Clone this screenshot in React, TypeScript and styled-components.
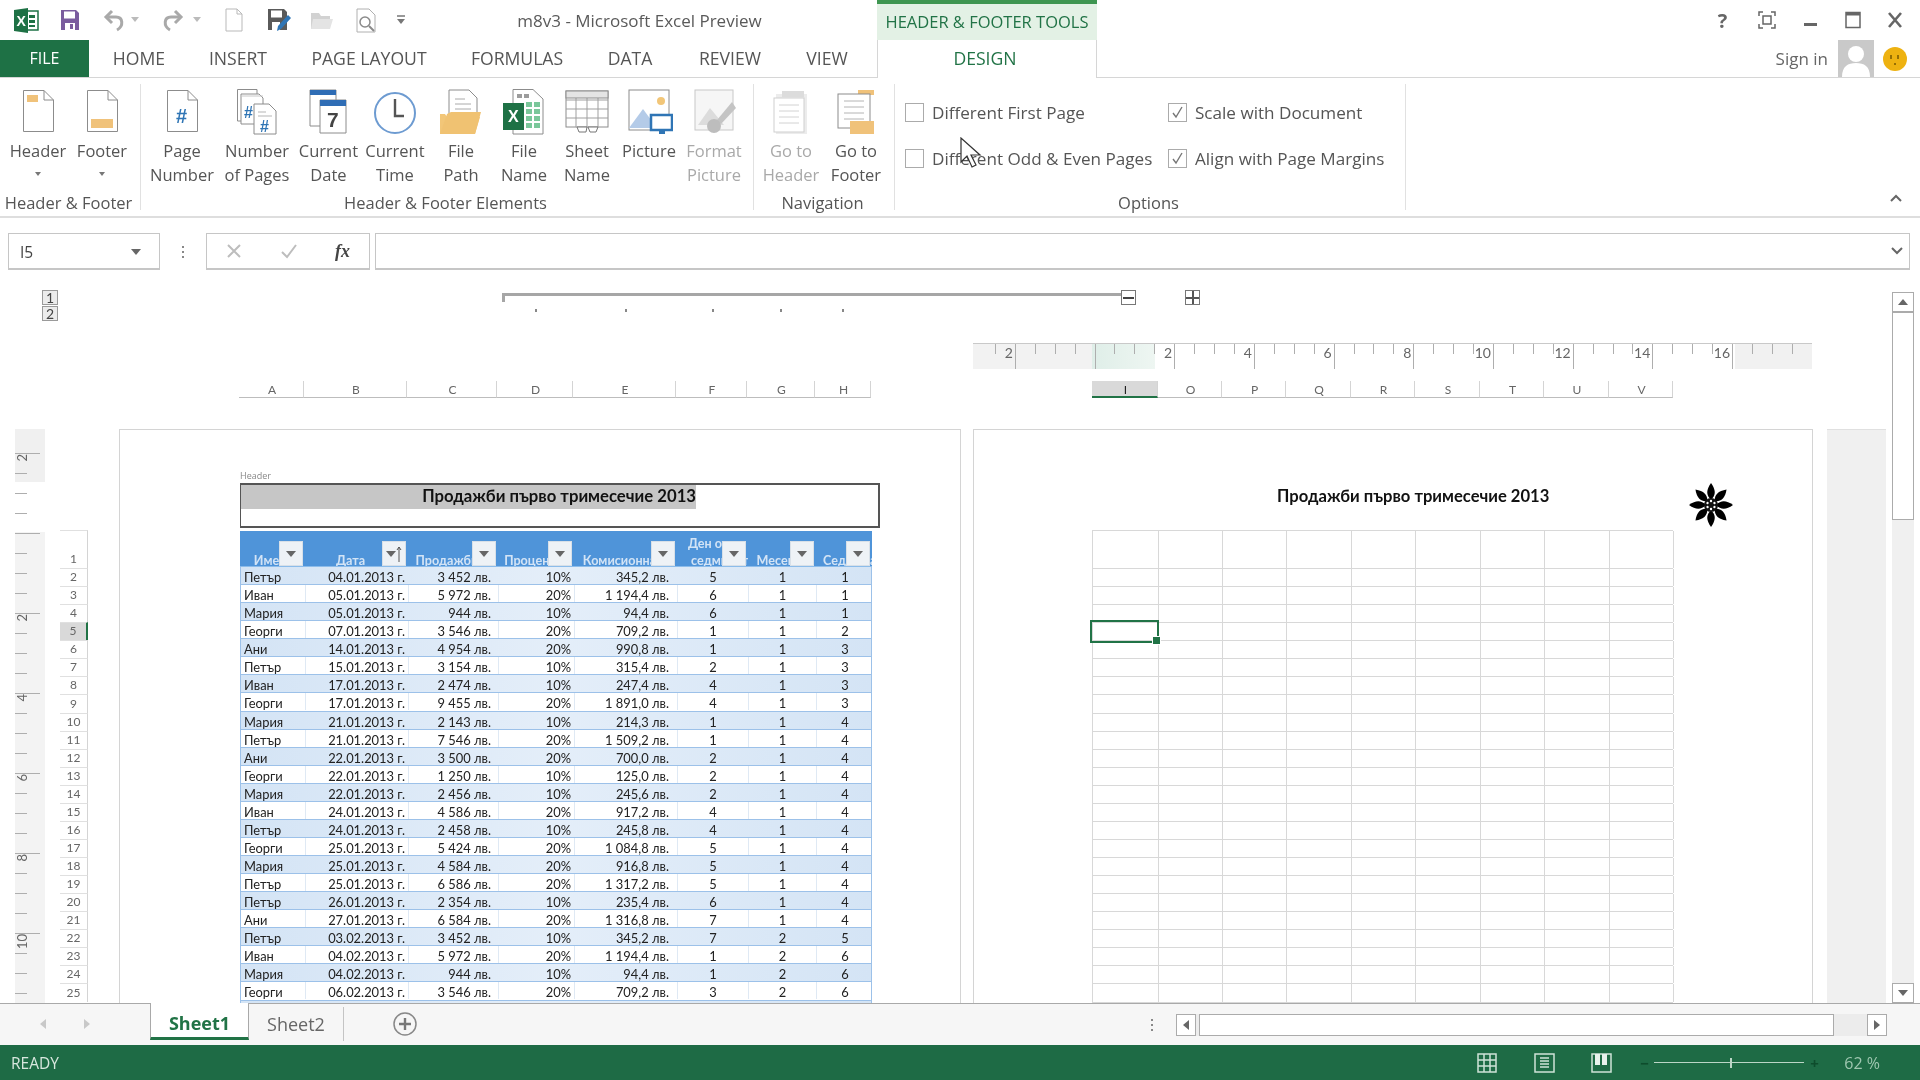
import React from 'react';
import styled, { createGlobalStyle } from 'styled-components';

const UI = '"Open Sans", "Noto Sans", sans-serif';
const SHEET = 'Lato, "Noto Sans", sans-serif';

const GlobalStyle = createGlobalStyle`
    html, body { margin: 0; padding: 0; background: #fff; }
    * { box-sizing: border-box; }
`;

const Window = styled.div`
    position: relative;
    width: 1920px;
    height: 1080px;
    overflow: hidden;
    display: flex;
    flex-direction: column;
    background: #fff;
    font-family: ${UI};
    color: #444;
    filter: blur(0.4px);
`;

/* title bar */
const TitleBar = styled.div`
    height: 40px;
    display: flex;
    align-items: stretch;
`;
const Qat = styled.div`
    width: 410px;
    display: flex;
    align-items: center;
    padding-left: 14px;
`;
const QatIcon = styled.svg<{ $gap: number }>`
    display: block;
    margin-right: ${({ $gap }) => $gap}px;
    flex: none;
`;
const TitleText = styled.div`
    width: 467px;
    text-align: center;
    font-size: 17px;
    line-height: 42px;
    color: #5a5a5a;
    padding-right: 8px;
    white-space: nowrap;
`;
const ToolTab = styled.div`
    width: 220px;
    background: #e3f1e5;
    border-top: 4px solid #3e9651;
    color: #217346;
    font-size: 16.5px;
    line-height: 35px;
    text-align: center;
    white-space: nowrap;
`;
const WindowControls = styled.div`
    margin-left: auto;
    display: flex;
    align-items: center;
    height: 40px;
    padding-right: 18px;
    gap: 27px;
`;
const HelpMark = styled.span`
    font-size: 20px;
    font-weight: 700;
    color: #666;
    width: 17px;
    text-align: center;
`;

/* tabs */
const TabRow = styled.div`
    height: 38px;
    display: flex;
    align-items: stretch;
    border-bottom: 1px solid #d6d6d6;
`;
const FileTab = styled.div`
    width: 89px;
    background: #1e7145;
    color: #fff;
    font-size: 16px;
    text-align: center;
    line-height: 37px;
`;
const Tab = styled.div<{ $w: number }>`
    width: ${({ $w }) => $w}px;
    text-align: center;
    font-size: 17.6px;
    line-height: 37px;
    color: #555;
    white-space: nowrap;
`;
const DesignTab = styled.div`
    width: 220px;
    margin-left: 6px;
    margin-bottom: -1px;
    background: #fff;
    border-right: 1px solid #d6d6d6;
    border-left: 1px solid #d6d6d6;
    color: #217346;
    font-size: 17.6px;
    font-weight: 500;
    line-height: 37px;
    text-align: center;
    padding-right: 4px;
`;
const Account = styled.div`
    margin-left: auto;
    display: flex;
    align-items: center;
    padding-right: 12px;
`;
const SignIn = styled.span`
    font-size: 17px;
    color: #666;
    margin-right: 10px;
`;

/* ribbon */
const Ribbon = styled.div`
    position: relative;
    height: 140px;
    padding-top: 6px;
    display: flex;
    align-items: flex-start;
    border-bottom: 2px solid #dedede;
`;
const Group = styled.div<{ $w: number }>`
    position: relative;
    width: ${({ $w }) => $w}px;
    height: 126px;
    border-right: 1px solid #e1e1e1;
    display: flex;
    flex-direction: column;
    flex: none;
`;
const GroupBody = styled.div<{ $pad: number }>`
    height: 110px;
    padding-left: ${({ $pad }) => $pad}px;
    display: flex;
    flex: none;
`;
const GroupLabel = styled.div`
    padding-right: 3px;
    font-size: 16.5px;
    line-height: 18px;
    text-align: center;
    color: #555;
    white-space: nowrap;
    flex: none;
`;
const RibbonButton = styled.div<{ $w: number; $off?: boolean }>`
    width: ${({ $w }) => $w}px;
    display: flex;
    flex-direction: column;
    align-items: center;
    flex: none;
    color: ${({ $off }) => ($off ? '#a9a9a9' : '#555')};
    font-size: 16.5px;
    line-height: 24px;
    white-space: nowrap;
    text-align: center;
`;
const ButtonIcon = styled.svg`
    display: block;
    margin-top: 4px;
    margin-bottom: 3px;
    flex: none;
`;
const Caret = styled.div`
    margin-top: 9px;
    width: 0;
    height: 0;
    border-left: 3.5px solid transparent;
    border-right: 3.5px solid transparent;
    border-top: 4px solid #777;
`;
const Options = styled.div`
    display: grid;
    grid-template-columns: 263px 1fr;
    grid-auto-rows: 46px;
    padding-top: 5px;
    padding-left: 10px;
    height: 110px;
    flex: none;
`;
const OptionRow = styled.div`
    display: flex;
    align-items: center;
    gap: 8px;
    font-size: 17.1px;
    color: #555;
    white-space: nowrap;
`;
const Check = styled.div`
    width: 19px;
    height: 19px;
    border: 1px solid #ababab;
    background: #fff;
    display: flex;
    align-items: center;
    justify-content: center;
    flex: none;
`;
const CollapseMark = styled.svg`
    position: absolute;
    right: 18px;
    top: 116px;
`;
const Pointer = styled.svg`
    position: absolute;
    left: 65px;
    top: 53px;
`;

/* formula bar */
const FormulaBar = styled.div`
    height: 60px;
    padding: 15px 10px 8px 8px;
    display: flex;
    align-items: stretch;
`;
const NameBox = styled.div`
    width: 152px;
    border: 1px solid #c6c6c6;
    border-bottom-width: 2px;
    display: flex;
    align-items: center;
    justify-content: space-between;
    padding: 2px 18px 0 11px;
    font-size: 15.5px;
    color: #444;
`;
const GripDots = styled.div`
    width: 46px;
    display: flex;
    flex-direction: column;
    align-items: center;
    justify-content: center;
    gap: 3px;
`;
const GripDot = styled.span`
    width: 2px;
    height: 2px;
    background: #888;
`;
const FnBox = styled.div`
    width: 164px;
    border: 1px solid #c6c6c6;
    border-bottom-width: 2px;
    display: flex;
    align-items: center;
    justify-content: space-between;
    padding: 0 19px 0 19px;
`;
const FxMark = styled.span`
    font-family: "Liberation Serif", serif;
    font-style: italic;
    font-weight: 700;
    font-size: 18px;
    color: #444;
`;
const FormulaInput = styled.div`
    flex: 1;
    margin-left: 5px;
    border: 1px solid #c6c6c6;
    border-bottom-width: 2px;
    display: flex;
    align-items: center;
    justify-content: flex-end;
    padding-right: 6px;
`;

/* sheet */
const Main = styled.div`
    flex: 1;
    display: flex;
    min-height: 0;
`;
const View = styled.div`
    width: 1892px;
    display: flex;
    flex-direction: column;
    min-height: 0;
`;
const OutlineRow = styled.div`
    height: 62px;
    padding: 12px 0 0 42px;
    display: flex;
    align-items: flex-start;
`;
const Levels = styled.div`
    width: 16px;
    display: flex;
    flex-direction: column;
    gap: 1px;
`;
const Level = styled.div`
    height: 15px;
    border: 1px solid #9a9a9a;
    background: #ececec;
    font-family: ${SHEET};
    font-size: 14px;
    line-height: 13px;
    text-align: center;
    color: #444;
`;
const OutlineTrack = styled.div`
    margin-left: 444px;
    width: 619px;
    height: 50px;
`;
const OutlineBar = styled.div`
    height: 9px;
    border-top: 3px solid #a6a6a6;
    border-left: 3px solid #a6a6a6;
    margin-top: 3px;
`;
const OutlineDots = styled.div`
    height: 4px;
    margin-top: 7px;
    display: grid;
    grid-template-columns: 35px 90px 87px 68px 62px;
`;
const OutlineDot = styled.i`
    width: 2px;
    height: 3px;
    background: #888;
    justify-self: end;
`;
const OutlineBtn = styled.div<{ $gap: number }>`
    width: 15px;
    height: 15px;
    margin-left: ${({ $gap }) => $gap}px;
    margin-top: 0;
    border: 1px solid #777;
    display: flex;
    align-items: center;
    justify-content: center;
`;
const MinusBar = styled.i`
    width: 11px;
    height: 2px;
    background: #444;
`;
const OutlinePlus = styled.div<{ $gap: number }>`
    width: 15px;
    height: 15px;
    margin-left: ${({ $gap }) => $gap}px;
    border: 1px solid #777;
    display: grid;
    grid-template-columns: 1fr 1fr;
    grid-template-rows: 1fr 1fr;
    gap: 2px;
    background: #555;
`;
const PlusCell = styled.i`
    background: #fff;
`;
const RulerRow = styled.div`
    height: 41px;
    padding: 3px 0 0 973px;
`;
const HRuler = styled.div`
    width: 839px;
    height: 26px;
    padding-left: 3px;
    border-top: 1px solid #c9c9c9;
    display: flex;
    background: linear-gradient(
        to right,
        #f2f2f2 0, #f2f2f2 119px,
        #dfeee8 119px, #eef6f2 182px,
        #fff 182px, #fff 762px,
        #f1f1f1 762px, #f1f1f1 100%
    );
`;
const HTick = styled.div`
    width: 19.93px;
    flex: none;
    display: flex;
    justify-content: flex-end;
    align-items: flex-start;
`;
const TickLabel = styled.span`
    font-family: ${SHEET};
    font-size: 14px;
    line-height: 14px;
    color: #666;
    margin: 2px 2px 0 0;
`;
const HTickLine = styled.i<{ $major: boolean }>`
    display: block;
    width: 1px;
    height: ${({ $major }) => ($major ? 25 : 10)}px;
    background: #aeaeae;
    flex: none;
`;
const ColRow = styled.div`
    height: 17px;
    margin-bottom: 31px;
    padding-left: 239px;
    display: flex;
`;
const ColHead = styled.div<{ $w: number; $active?: boolean }>`
    width: ${({ $w }) => $w}px;
    flex: none;
    padding-left: 2px;
    border-right: 1px solid #d4d4d4;
    border-bottom: ${({ $active }) => ($active ? '2px solid #217346' : '1.5px solid #bdbdbd')};
    background: ${({ $active }) => ($active ? '#d9d9d9' : 'transparent')};
    font-family: ${SHEET};
    font-size: 12px;
    line-height: 17px;
    text-align: center;
    color: ${({ $active }) => ($active ? '#222' : '#666')};
`;
const ColSpacer = styled.div`
    width: 221px;
    flex: none;
`;
const PageArea = styled.div`
    flex: 1;
    min-height: 0;
    display: flex;
    overflow: hidden;
`;
const VRuler = styled.div`
    width: 30px;
    margin-left: 15px;
    padding-top: 23px;
    flex: none;
    background: linear-gradient(to bottom, #f0f0f0 0, #f0f0f0 53px, #fff 53px, #fff 103px, #f3f3f3 103px);
`;
const VTick = styled.div<{ $major: boolean }>`
    height: 20px;
    border-top: 1px solid transparent;
    display: flex;
    flex-direction: column;
    &::before {
        content: '';
        display: block;
        height: 1px;
        width: ${({ $major }) => ($major ? 25 : 12)}px;
        background: #aeaeae;
        flex: none;
    }
`;
const VLabel = styled.span`
    writing-mode: vertical-rl;
    transform: rotate(180deg);
    font-family: ${SHEET};
    font-size: 13px;
    line-height: 14px;
    color: #666;
    align-self: flex-start;
`;
const RowHeads = styled.div`
    width: 28px;
    margin-left: 15px;
    padding-top: 101px;
    flex: none;
`;
const RowHead = styled.div<{ $h: number; $active?: boolean }>`
    height: ${({ $h }) => $h}px;
    padding-bottom: 1px;
    border-top: 1px solid #e0e0e0;
    border-right: ${({ $active }) => ($active ? '2px solid #217346' : '1px solid #d4d4d4')};
    background: ${({ $active }) => ($active ? '#d9d9d9' : 'transparent')};
    display: flex;
    align-items: flex-end;
    justify-content: center;
    font-family: ${SHEET};
    font-size: 12px;
    line-height: 16px;
    color: #666;
`;
const LeftPage = styled.div`
    width: 842px;
    margin-left: 31px;
    padding: 38px 0 0 120px;
    flex: none;
    border: 1px solid #d4d4d4;
    border-bottom: 0;
`;
const HeaderTag = styled.div`
    font-size: 9px;
    line-height: 15px;
    color: #888;
`;
const HeaderBox = styled.div`
    width: 640px;
    height: 45px;
    border: 2px solid #555;
    border-left-width: 1.5px;
`;
const HeaderLine = styled.div`
    height: 24px;
    width: 455px;
    background: #c6c6c6;
    font-family: ${SHEET};
    font-weight: 700;
    font-size: 16.7px;
    line-height: 22px;
    color: #111;
    text-align: right;
    white-space: nowrap;
`;
const Table = styled.div`
    margin-top: 3px;
    width: 632px;
    font-family: ${SHEET};
    font-size: 12.9px;
    color: #222;
`;
const COLS = '65px 103px 90px 76px 103px 71px 68px 56px';
const TableHead = styled.div`
    height: 36px;
    display: grid;
    grid-template-columns: ${COLS};
    background: #4f94d9;
    border-bottom: 1px solid #8cbcea;
`;
const HeadCell = styled.div<{ $left?: number }>`
    position: relative;
    display: flex;
    align-items: flex-end;
    justify-content: ${({ $left }) => ($left ? 'flex-start' : 'center')};
    padding: ${({ $left }) => ($left ? `0 0 0 ${$left}px` : '0 12px 0 0')};
    text-align: ${({ $left }) => ($left ? 'left' : 'center')};
    overflow: hidden;
    color: #d3e4f6;
    font-weight: 700;
    font-size: 12.6px;
    line-height: 17px;
    white-space: pre;
`;
const HeadText = styled.span`
    margin-bottom: -3px;
`;
const FilterBtn = styled.div`
    position: absolute;
    right: 2px;
    bottom: 0;
    width: 24px;
    height: 25px;
    background: #eef2f6;
    border: 1px solid #d8e0e8;
    display: flex;
    align-items: center;
    justify-content: center;
`;
const Row = styled.div<{ $band: boolean }>`
    height: 18.07px;
    display: grid;
    grid-template-columns: ${COLS};
    background: ${({ $band }) => ($band ? 'linear-gradient(to right, #d4e4f5, #e4eef9 50%, #d4e4f5)' : '#fff')};
    border-bottom: 1px solid #9cc1e9;
    border-left: 1px solid #9cc1e9;
    border-right: 1px solid #9cc1e9;
`;
const Cell = styled.div<{ $align: 'left' | 'right' | 'center'; $pad: number; $band: boolean }>`
    text-align: ${({ $align }) => $align};
    ${({ $align, $pad }) => ($align === 'left' ? `padding-left: ${$pad}px;` : `padding-right: ${$pad}px;`)}
    height: 17px;
    line-height: 20px;
    white-space: nowrap;
    overflow: hidden;
    border-right: 1px solid ${({ $band }) => ($band ? 'transparent' : '#dfe9f4')};
    &:last-child { border-right: 0; }
`;
const RightPage = styled.div`
    width: 840px;
    margin-left: 12px;
    padding: 52px 0 0 118px;
    flex: none;
    border: 1px solid #d4d4d4;
    border-bottom: 0;
`;
const PageTitleRow = styled.div`
    height: 48px;
    display: flex;
    align-items: center;
`;
const PageTitle = styled.div`
    margin-left: 185px;
    margin-bottom: 20px;
    width: 273px;
    font-family: ${SHEET};
    font-weight: 700;
    font-size: 16.6px;
    color: #111;
    white-space: nowrap;
`;
const Flower = styled.svg`
    margin: 0 0 3px 139px;
    flex: none;
`;
const GridRow = styled.div<{ $h: number }>`
    height: ${({ $h }) => $h}px;
    display: grid;
    grid-template-columns: 66px 64px 64px 65px 64px 65px 64px 65px 64px;
    width: 581px;
    border-top: 1px solid #d8d8d8;
    border-left: 1px solid #d8d8d8;
`;
const GridCell = styled.div`
    position: relative;
    border-right: 1px solid #d8d8d8;
`;
const ActiveCell = styled.div`
    position: absolute;
    left: -3px;
    top: -3px;
    width: 69px;
    height: 23px;
    border: 2px solid #217346;
    z-index: 2;
    &::after {
        content: '';
        position: absolute;
        right: -4px;
        bottom: -4px;
        width: 7px;
        height: 7px;
        background: #217346;
        border: 1px solid #fff;
    }
`;
const NextPage = styled.div`
    width: 59px;
    margin-left: 14px;
    flex: none;
    background: #f0f0f0;
    border-top: 1px solid #e0e0e0;
`;
const VScroll = styled.div`
    width: 22px;
    display: flex;
    flex-direction: column;
    padding-top: 14px;
    flex: none;
    background: linear-gradient(to bottom, #fff 0, #fff 14px, #f0f0f0 14px);
`;
const ScrollBtn = styled.div`
    height: 20px;
    background: #fff;
    border: 1px solid #ababab;
    display: flex;
    align-items: center;
    justify-content: center;
    flex: none;
`;
const VThumb = styled.div`
    height: 208px;
    background: #fff;
    border: 1px solid #ababab;
    flex: none;
`;
const VTrack = styled.div`
    flex: 1;
`;

/* sheet tabs */
const TabsBar = styled.div`
    height: 42px;
    background: #f6f6f6;
    border-top: 1px solid #a9a9a9;
    display: flex;
    align-items: flex-start;
`;
const NavArrows = styled.div`
    width: 150px;
    height: 40px;
    padding-left: 39px;
    display: flex;
    align-items: center;
    gap: 36px;
`;
const SheetTab = styled.div<{ $active?: boolean }>`
    width: ${({ $active }) => ($active ? 99 : 95)}px;
    height: ${({ $active }) => ($active ? 37 : 34)}px;
    margin-top: ${({ $active }) => ($active ? -1 : 3)}px;
    background: ${({ $active }) => ($active ? '#fff' : 'transparent')};
    border-left: ${({ $active }) => ($active ? '1px solid #a9a9a9' : '0')};
    border-right: 1px solid ${({ $active }) => ($active ? '#a9a9a9' : '#c4c4c4')};
    border-bottom: ${({ $active }) => ($active ? '3px solid #217346' : '0')};
    color: ${({ $active }) => ($active ? '#217346' : '#666')};
    font-weight: ${({ $active }) => ($active ? 700 : 400)};
    font-size: 18px;
    line-height: ${({ $active }) => ($active ? 40 : 34)}px;
    text-align: center;
    flex: none;
`;
const AddSheet = styled.svg`
    margin: 8px 0 0 49px;
    flex: none;
`;
const HScrollArea = styled.div`
    margin-left: auto;
    margin-right: 33px;
    margin-top: 10px;
    display: flex;
    align-items: center;
`;
const HGrip = styled(GripDots)`
    width: 24px;
    margin-right: 12px;
`;
const HScroll = styled.div`
    width: 711px;
    height: 22px;
    display: flex;
    background: #ececec;
`;
const HBtn = styled.div<{ $gap?: number }>`
    width: 20px;
    margin-left: ${({ $gap }) => $gap ?? 0}px;
    background: #fff;
    border: 1px solid #ababab;
    display: flex;
    align-items: center;
    justify-content: center;
    flex: none;
`;
const HThumb = styled.div`
    width: 635px;
    margin-left: 3px;
    background: #fff;
    border: 1px solid #ababab;
    flex: none;
`;

/* status bar */
const StatusBar = styled.div`
    height: 35px;
    background: #1e6b45;
    display: flex;
    align-items: center;
    padding: 0 40px 0 11px;
    color: #d8e7de;
    font-size: 15.5px;
`;
const StatusTools = styled.div`
    margin-left: auto;
    display: flex;
    align-items: center;
`;
const ViewIcon = styled.svg<{ $gap: number }>`
    margin-right: ${({ $gap }) => $gap}px;
    flex: none;
`;
const ZoomTrack = styled.div`
    width: 150px;
    height: 1px;
    margin: 0 6px;
    padding-left: 76px;
    background: #bcd6c7;
    display: flex;
    align-items: center;
`;
const ZoomKnob = styled.i`
    width: 2px;
    height: 10px;
    background: #bcd6c7;
`;
const ZoomSign = styled.span`
    font-size: 15px;
    font-weight: 700;
    color: #0e4c2c;
    width: 8px;
    text-align: center;
    line-height: 12px;
`;
const ZoomValue = styled.span`
    margin-left: 26px;
    color: #9fc7b0;
    font-size: 16px;
`;
const Smiley = styled.svg`
    margin-left: 8px;
    flex: none;
`;

const G = '#8c8c8c';
const docPath = 'M9.5 2.5H30L39.5 12V43.5H9.5Z';
const Fold = ({ c = G }: { c?: string }) => <path d="M30 2.5V12H39.5" fill="none" stroke={c} />;
const Ico = ({ children, w = 48 }: { children: React.ReactNode; w?: number }) => (
    <ButtonIcon width={w} height="48" viewBox="0 0 48 48">
        {children}
    </ButtonIcon>
);
const Hash = ({ x, y, s = 20 }: { x: number; y: number; s?: number }) => (
    <text x={x} y={y} fontSize={s} fontWeight="700" fontFamily="Liberation Sans" fill="#2f75b5">
        #
    </text>
);

const icons: Record<string, React.ReactNode> = {
    header: (
        <>
            <path d={docPath} fill="#fff" stroke={G} />
            <Fold />
            <rect x="13" y="7" width="11" height="7" fill="#f0c27a" />
        </>
    ),
    footer: (
        <>
            <path d={docPath} fill="#fff" stroke={G} />
            <Fold />
            <rect x="13" y="31" width="22" height="9" fill="#f0c27a" />
        </>
    ),
    page: (
        <>
            <path d={docPath} fill="#fff" stroke={G} />
            <Fold />
            <Hash x={18} y={35} />
        </>
    ),
    pages: (
        <>
            <path d="M4.5 1.5H24V33H4.5Z" fill="#fff" stroke={G} />
            <path d="M8 6H26L30 10V36H8Z" fill="#fff" stroke={G} />
            <Hash x={11} y={30} s={16} />
            <path d="M8 8H30" stroke="#c8c8c8" />
            <path d="M21 16H36L43 23V46H21Z" fill="#fff" stroke={G} />
            <path d="M25 24H33M25 28H39" stroke="#b5b5b5" />
            <Hash x={27} y={44} s={16} />
        </>
    ),
    date: (
        <>
            <path d="M5 2H31V38H5Z" fill="#fff" stroke={G} />
            <rect x="5" y="2" width="26" height="5" fill="#2f6db5" />
            <path d="M15 12H41V45H15Z" fill="#fff" stroke={G} />
            <rect x="15" y="12" width="26" height="6" fill="#2f6db5" />
            <text x="22" y="39" fontSize="21" fontWeight="700" fontFamily="Liberation Sans" fill="#444">
                7
            </text>
        </>
    ),
    time: (
        <>
            <circle cx="24" cy="25" r="20" fill="#fff" stroke="#6d9bd1" strokeWidth="2" />
            <path d="M24 11V28H33" fill="none" stroke="#555" strokeWidth="2.4" />
        </>
    ),
    path: (
        <>
            <path d="M12 2H32L40 10V34H12Z" fill="#fff" stroke={G} />
            <path d="M18 11H28M18 16H34M18 21H34" stroke="#aaa" />
            <path d="M3 26H8L10 29H43L38 46H3Z" fill="#f2c678" />
            <path d="M10 26L14 24H44L38 46H3Z" fill="#f0c272" />
        </>
    ),
    name: (
        <>
            <path d="M13 1.5H33L43 11V46H13Z" fill="#fff" stroke={G} />
            <rect x="17" y="6" width="5" height="4" fill="#9c9c9c" />
            <rect x="24" y="6" width="5" height="4" fill="#9c9c9c" />
            <path d="M26 14h6v5h-6zM34 14h6v5h-6zM26 21h6v5h-6zM34 21h6v5h-6zM26 28h6v5h-6zM34 28h6v5h-6zM26 35h6v5h-6zM34 35h6v5h-6z" fill="#7ac79a" />
            <rect x="3" y="15" width="21" height="27" fill="#1e7145" />
            <text x="8" y="34" fontSize="16" fontWeight="700" fontFamily="Liberation Sans" fill="#fff">
                X
            </text>
        </>
    ),
    sheet: (
        <>
            <rect x="3" y="3" width="42" height="36" fill="#fff" stroke={G} />
            <path d="M3 12H45M3 21H45M3 30H45M13 3V39M24 3V39M35 3V39" stroke="#9f9f9f" fill="none" />
            <rect x="3" y="3" width="42" height="7" fill="#e4e4e4" stroke={G} />
            <path d="M14 39H24L23 44H16ZM25 39H35L33 44H27Z" fill="#fff" stroke="#777" />
        </>
    ),
    picture: (
        <>
            <rect x="4" y="2" width="40" height="40" fill="#fff" stroke={G} />
            <circle cx="36" cy="13" r="4" fill="#f2c678" />
            <path d="M4 40L18 21L32 40Z" fill="#b4cbe8" />
            <rect x="26" y="27" width="21" height="15" fill="#fff" stroke="#2f75b5" strokeWidth="2.5" />
            <path d="M34 43H40V46H34Z" fill="#2f75b5" />
        </>
    ),
    format: (
        <>
            <rect x="5" y="2" width="38" height="40" fill="#f6f6f6" stroke="#c8c8c8" />
            <path d="M8 37L20 20L34 37Z" fill="#dcdcdc" />
            <path d="M42 14L27 32L31 36L46 20Z" fill="#c4c4c4" />
            <circle cx="24" cy="38" r="7" fill="#bdbdbd" />
        </>
    ),
    toHeader: (
        <>
            <rect x="9" y="6" width="31" height="40" fill="#ececec" />
            <rect x="7" y="10" width="30" height="34" fill="#fff" stroke="#cfcfcf" />
            <rect x="15" y="3" width="22" height="6" fill="#dcdcdc" />
            <path d="M12 17H32M12 23H32M12 29H32M12 35H32" stroke="#d2d2d2" />
        </>
    ),
    toFooter: (
        <>
            <rect x="26" y="2" width="16" height="5" fill="#f0c27a" />
            <rect x="6" y="6" width="32" height="34" fill="#fff" stroke={G} />
            <path d="M12 13H32M12 19H32M12 25H32M12 31H32" stroke="#b4b4b4" />
            <rect x="18" y="33" width="24" height="13" fill="#f0c27a" />
        </>
    ),
};

type RibbonItem = { key: string; w: number; label: string; off?: boolean; caret?: boolean };
const groupOne: RibbonItem[] = [
    { key: 'header', w: 64, label: 'Header', caret: true },
    { key: 'footer', w: 64, label: 'Footer', caret: true },
];
const groupTwo: RibbonItem[] = [
    { key: 'page', w: 70, label: 'Page\nNumber' },
    { key: 'pages', w: 80, label: 'Number\nof Pages' },
    { key: 'date', w: 63, label: 'Current\nDate' },
    { key: 'time', w: 70, label: 'Current\nTime' },
    { key: 'path', w: 62, label: 'File\nPath' },
    { key: 'name', w: 64, label: 'File\nName' },
    { key: 'sheet', w: 62, label: 'Sheet\nName' },
    { key: 'picture', w: 62, label: 'Picture' },
    { key: 'format', w: 68, label: 'Format\nPicture', off: true },
];
const groupThree: RibbonItem[] = [
    { key: 'toHeader', w: 70, label: 'Go to\nHeader', off: true },
    { key: 'toFooter', w: 60, label: 'Go to\nFooter' },
];

const RibbonItems = ({ items, pad }: { items: RibbonItem[]; pad: number }) => (
    <GroupBody $pad={pad}>
        {items.map((it) => (
            <RibbonButton key={it.key} $w={it.w} $off={it.off}>
                <Ico>{icons[it.key]}</Ico>
                {it.label.split('\n').map((l) => (
                    <span key={l}>{l}</span>
                ))}
                {it.caret && <Caret />}
            </RibbonButton>
        ))}
    </GroupBody>
);

const rows: string[][] = [
    ['Петър', '04.01.2013 г.', '3 452 лв.', '10%', '345,2 лв.', '5', '1', '1'],
    ['Иван', '05.01.2013 г.', '5 972 лв.', '20%', '1 194,4 лв.', '6', '1', '1'],
    ['Мария', '05.01.2013 г.', '944 лв.', '10%', '94,4 лв.', '6', '1', '1'],
    ['Георги', '07.01.2013 г.', '3 546 лв.', '20%', '709,2 лв.', '1', '1', '2'],
    ['Ани', '14.01.2013 г.', '4 954 лв.', '20%', '990,8 лв.', '1', '1', '3'],
    ['Петър', '15.01.2013 г.', '3 154 лв.', '10%', '315,4 лв.', '2', '1', '3'],
    ['Иван', '17.01.2013 г.', '2 474 лв.', '10%', '247,4 лв.', '4', '1', '3'],
    ['Георги', '17.01.2013 г.', '9 455 лв.', '20%', '1 891,0 лв.', '4', '1', '3'],
    ['Мария', '21.01.2013 г.', '2 143 лв.', '10%', '214,3 лв.', '1', '1', '4'],
    ['Петър', '21.01.2013 г.', '7 546 лв.', '20%', '1 509,2 лв.', '1', '1', '4'],
    ['Ани', '22.01.2013 г.', '3 500 лв.', '20%', '700,0 лв.', '2', '1', '4'],
    ['Георги', '22.01.2013 г.', '1 250 лв.', '10%', '125,0 лв.', '2', '1', '4'],
    ['Мария', '22.01.2013 г.', '2 456 лв.', '10%', '245,6 лв.', '2', '1', '4'],
    ['Иван', '24.01.2013 г.', '4 586 лв.', '20%', '917,2 лв.', '4', '1', '4'],
    ['Петър', '24.01.2013 г.', '2 458 лв.', '10%', '245,8 лв.', '4', '1', '4'],
    ['Георги', '25.01.2013 г.', '5 424 лв.', '20%', '1 084,8 лв.', '5', '1', '4'],
    ['Мария', '25.01.2013 г.', '4 584 лв.', '20%', '916,8 лв.', '5', '1', '4'],
    ['Петър', '25.01.2013 г.', '6 586 лв.', '20%', '1 317,2 лв.', '5', '1', '4'],
    ['Петър', '26.01.2013 г.', '2 354 лв.', '10%', '235,4 лв.', '6', '1', '4'],
    ['Ани', '27.01.2013 г.', '6 584 лв.', '20%', '1 316,8 лв.', '7', '1', '4'],
    ['Петър', '03.02.2013 г.', '3 452 лв.', '10%', '345,2 лв.', '7', '2', '5'],
    ['Иван', '04.02.2013 г.', '5 972 лв.', '20%', '1 194,4 лв.', '1', '2', '6'],
    ['Мария', '04.02.2013 г.', '944 лв.', '10%', '94,4 лв.', '1', '2', '6'],
    ['Георги', '06.02.2013 г.', '3 546 лв.', '20%', '709,2 лв.', '3', '2', '6'],
];
const headLabels = ['Име', 'Дата', 'Продажби', 'Процент', 'Комисионна', 'Ден от\n седмицата', 'Месец', 'Седмица'];
const headLeft: Record<number, number> = { 5: 11, 7: 7 };
const cellAlign: { a: 'left' | 'right' | 'center'; p: number }[] = [
    { a: 'left', p: 3 },
    { a: 'right', p: 3 },
    { a: 'right', p: 7 },
    { a: 'right', p: 3 },
    { a: 'right', p: 8 },
    { a: 'center', p: 0 },
    { a: 'center', p: 0 },
    { a: 'center', p: 0 },
];
const leftCols: [string, number][] = [['A', 65], ['B', 103], ['C', 90], ['D', 76], ['E', 103], ['F', 71], ['G', 68], ['H', 56]];
const rightCols: [string, number][] = [['I', 66], ['O', 64], ['P', 64], ['Q', 65], ['R', 64], ['S', 65], ['T', 64], ['U', 65], ['V', 64]];
const hLabels: Record<number, string> = { 2: '2', 10: '2', 14: '4', 18: '6', 22: '8', 26: '10', 30: '12', 34: '14', 38: '16' };
const vLabels: Record<number, string> = { 0: '2', 8: '2', 12: '4', 16: '6', 20: '8', 24: '10' };

const Tri = ({ dir, c = '#666' }: { dir: 'up' | 'down' | 'left' | 'right'; c?: string }) => {
    const pts = { up: '0,7 5,1 10,7', down: '0,1 10,1 5,7', left: '7,0 7,10 1,5', right: '1,0 1,10 7,5' }[dir];
    const vert = dir === 'up' || dir === 'down';
    return (
        <svg width={vert ? 10 : 8} height={vert ? 8 : 10} viewBox={vert ? '0 0 10 8' : '0 0 8 10'}>
            <polygon points={pts} fill={c} />
        </svg>
    );
};

export default function App() {
    return (
        <Window>
            <GlobalStyle />
            <TitleBar>
                <Qat>
                    <QatIcon $gap={21} width="25" height="25" viewBox="0 0 25 25">
                        <rect x="9" y="3" width="15" height="19" fill="#fff" stroke="#1e7145" strokeWidth="1.5" />
                        <path d="M15 7h6v3h-6zM15 12h6v3h-6zM15 17h6v2h-6z" fill="#1e7145" />
                        <path d="M0 2L14 0V25L0 23Z" fill="#1e7145" />
                        <text x="2.5" y="18" fontSize="14" fontWeight="700" fontFamily="Liberation Sans" fill="#fff">
                            X
                        </text>
                    </QatIcon>
                    <QatIcon $gap={23} width="20" height="22" viewBox="0 0 20 22">
                        <path d="M1 1H16L19 4V21H1Z" fill="#7a5c9e" />
                        <rect x="4" y="2.5" width="11" height="7" fill="#fff" />
                        <rect x="5" y="14" width="10" height="7" fill="#fff" />
                        <rect x="10" y="15" width="3" height="5" fill="#7a5c9e" />
                    </QatIcon>
                    <QatIcon $gap={4} width="24" height="24" viewBox="0 0 24 24">
                        <path d="M9 3L3 9L9 15" fill="none" stroke="#a9a9a9" strokeWidth="3" />
                        <path d="M4 9H13C20 9 21 18 14 22" fill="none" stroke="#a9a9a9" strokeWidth="3" />
                    </QatIcon>
                    <QatIcon $gap={21} width="8" height="6" viewBox="0 0 8 6">
                        <polygon points="0,0 8,0 4,5" fill="#bbb" />
                    </QatIcon>
                    <QatIcon $gap={9} width="24" height="24" viewBox="0 0 24 24">
                        <path d="M15 3L21 9L15 15" fill="none" stroke="#a9a9a9" strokeWidth="3" />
                        <path d="M20 9H11C4 9 3 18 10 22" fill="none" stroke="#a9a9a9" strokeWidth="3" />
                    </QatIcon>
                    <QatIcon $gap={24} width="8" height="6" viewBox="0 0 8 6">
                        <polygon points="0,0 8,0 4,5" fill="#bbb" />
                    </QatIcon>
                    <QatIcon $gap={24} width="18" height="24" viewBox="0 0 18 24">
                        <path d="M1 1H12L17 6V23H1Z" fill="#fff" stroke="#b9b9b9" />
                        <path d="M12 1V6H17" fill="none" stroke="#b9b9b9" />
                    </QatIcon>
                    <QatIcon $gap={19} width="24" height="24" viewBox="0 0 24 24">
                        <path d="M1 1H17L20 4V22H1Z" fill="#5a5a5a" />
                        <rect x="4" y="2.5" width="11" height="7" fill="#fff" />
                        <rect x="5" y="14" width="8" height="8" fill="#fff" />
                        <path d="M10 23L11 18L21 7L24 10L14 21Z" fill="#2f75b5" />
                    </QatIcon>
                    <QatIcon $gap={22} width="24" height="20" viewBox="0 0 24 20">
                        <path d="M1 3H9L11 6H20V19H1Z" fill="#d2d2d2" />
                        <path d="M3 9H23L20 19H1Z" fill="#e4e4e4" />
                    </QatIcon>
                    <QatIcon $gap={20} width="21" height="25" viewBox="0 0 21 25">
                        <path d="M1 1H13L19 7V24H1Z" fill="#fff" stroke="#b0b0b0" />
                        <circle cx="9" cy="14" r="5" fill="none" stroke="#8a8a8a" strokeWidth="1.5" />
                        <path d="M13 18L18 23" stroke="#8a8a8a" strokeWidth="2" />
                    </QatIcon>
                    <QatIcon $gap={0} width="8" height="10" viewBox="0 0 8 10">
                        <path d="M0 1H8" stroke="#777" strokeWidth="1.5" />
                        <polygon points="0,4 8,4 4,9" fill="#777" />
                    </QatIcon>
                </Qat>
                <TitleText>m8v3 - Microsoft Excel Preview</TitleText>
                <ToolTab>HEADER &amp; FOOTER TOOLS</ToolTab>
                <WindowControls>
                    <HelpMark>?</HelpMark>
                    <svg width="18" height="18" viewBox="0 0 18 18">
                        <path d="M1 5V1H5M13 1H17V5M17 13V17H13M5 17H1V13" fill="none" stroke="#666" strokeWidth="1.5" />
                        <rect x="5" y="5" width="8" height="8" fill="none" stroke="#666" strokeWidth="1.5" />
                    </svg>
                    <svg width="15" height="18" viewBox="0 0 15 18">
                        <rect x="1" y="12" width="13" height="3" fill="#666" />
                    </svg>
                    <svg width="16" height="18" viewBox="0 0 16 18">
                        <rect x="1" y="1.5" width="14" height="15" fill="none" stroke="#666" strokeWidth="1.5" />
                        <rect x="1" y="1" width="14" height="3.5" fill="#666" />
                    </svg>
                    <svg width="14" height="16" viewBox="0 0 14 16">
                        <path d="M1 1L13 15M13 1L1 15" stroke="#666" strokeWidth="2.6" />
                    </svg>
                </WindowControls>
            </TitleBar>

            <TabRow>
                <FileTab>FILE</FileTab>
                <Tab $w={100}>HOME</Tab>
                <Tab $w={98}>INSERT</Tab>
                <Tab $w={164}>PAGE LAYOUT</Tab>
                <Tab $w={132}>FORMULAS</Tab>
                <Tab $w={94}>DATA</Tab>
                <Tab $w={106}>REVIEW</Tab>
                <Tab $w={88}>VIEW</Tab>
                <DesignTab>DESIGN</DesignTab>
                <Account>
                    <SignIn>Sign in</SignIn>
                    <svg width="36" height="37" viewBox="0 0 36 37">
                        <rect width="36" height="37" fill="#c9c9c9" />
                        <circle cx="18" cy="14" r="8" fill="#fff" />
                        <path d="M4 37C4 26 10 23 18 23C26 23 32 26 32 37Z" fill="#fff" />
                    </svg>
                    <Smiley width="26" height="26" viewBox="0 0 26 26">
                        <circle cx="13" cy="13" r="12" fill="#eeb211" />
                        <path d="M9 9V13M16 9V13M12 18H14" stroke="#7a5a00" strokeWidth="1.5" />
                    </Smiley>
                </Account>
            </TabRow>

            <Ribbon>
                <Group $w={141}>
                    <RibbonItems items={groupOne} pad={6} />
                    <GroupLabel>Header &amp; Footer</GroupLabel>
                </Group>
                <Group $w={613}>
                    <RibbonItems items={groupTwo} pad={6} />
                    <GroupLabel>Header &amp; Footer Elements</GroupLabel>
                </Group>
                <Group $w={141}>
                    <RibbonItems items={groupThree} pad={2} />
                    <GroupLabel>Navigation</GroupLabel>
                </Group>
                <Group $w={511}>
                    <Options>
                        <OptionRow>
                            <Check />
                            Different First Page
                        </OptionRow>
                        <OptionRow>
                            <Check>
                                <svg width="13" height="13" viewBox="0 0 13 13">
                                    <path d="M2 7L5 11L11 1" fill="none" stroke="#777" strokeWidth="1.4" />
                                </svg>
                            </Check>
                            Scale with Document
                        </OptionRow>
                        <OptionRow>
                            <Check />
                            Different Odd &amp; Even Pages
                        </OptionRow>
                        <OptionRow>
                            <Check>
                                <svg width="13" height="13" viewBox="0 0 13 13">
                                    <path d="M2 7L5 11L11 1" fill="none" stroke="#777" strokeWidth="1.4" />
                                </svg>
                            </Check>
                            Align with Page Margins
                        </OptionRow>
                    </Options>
                    <GroupLabel>Options</GroupLabel>
                    <Pointer width="26" height="32" viewBox="0 0 26 32">
                        <path d="M1 1V25L7 19L12 30L16 28L11 18H20Z" fill="#fff" stroke="#333" strokeWidth="1.2" />
                    </Pointer>
                </Group>
                <CollapseMark width="12" height="8" viewBox="0 0 12 8">
                    <path d="M1 7L6 2L11 7" fill="none" stroke="#666" strokeWidth="2" />
                </CollapseMark>
            </Ribbon>

            <FormulaBar>
                <NameBox>
                    I5
                    <Tri dir="down" />
                </NameBox>
                <GripDots>
                    <GripDot />
                    <GripDot />
                    <GripDot />
                </GripDots>
                <FnBox>
                    <svg width="16" height="16" viewBox="0 0 16 16">
                        <path d="M2 2L14 14M14 2L2 14" stroke="#bdbdbd" strokeWidth="2" />
                    </svg>
                    <svg width="18" height="16" viewBox="0 0 18 16">
                        <path d="M2 9L7 14L16 2" fill="none" stroke="#bdbdbd" strokeWidth="2" />
                    </svg>
                    <FxMark>fx</FxMark>
                </FnBox>
                <FormulaInput>
                    <svg width="12" height="8" viewBox="0 0 12 8">
                        <path d="M1 1L6 6L11 1" fill="none" stroke="#666" strokeWidth="2" />
                    </svg>
                </FormulaInput>
            </FormulaBar>

            <Main>
                <View>
                    <OutlineRow>
                        <Levels>
                            <Level>1</Level>
                            <Level>2</Level>
                        </Levels>
                        <OutlineTrack>
                            <OutlineBar />
                            <OutlineDots>
                                <OutlineDot />
                                <OutlineDot />
                                <OutlineDot />
                                <OutlineDot />
                                <OutlineDot />
                            </OutlineDots>
                        </OutlineTrack>
                        <OutlineBtn $gap={0}>
                            <MinusBar />
                        </OutlineBtn>
                        <OutlinePlus $gap={49}>
                            <PlusCell />
                            <PlusCell />
                            <PlusCell />
                            <PlusCell />
                        </OutlinePlus>
                    </OutlineRow>
                    <RulerRow>
                        <HRuler>
                            {Array.from({ length: 41 }, (_, i) => i + 1).map((k) => (
                                <HTick key={k}>
                                    {hLabels[k] && <TickLabel>{hLabels[k]}</TickLabel>}
                                    <HTickLine $major={(k + 2) % 4 === 0} />
                                </HTick>
                            ))}
                        </HRuler>
                    </RulerRow>
                    <ColRow>
                        {leftCols.map(([n, w]) => (
                            <ColHead key={n} $w={w}>
                                {n}
                            </ColHead>
                        ))}
                        <ColSpacer />
                        {rightCols.map(([n, w]) => (
                            <ColHead key={n} $w={w} $active={n === 'I'}>
                                {n}
                            </ColHead>
                        ))}
                    </ColRow>
                    <PageArea>
                        <VRuler>
                            {Array.from({ length: 28 }, (_, k) => (
                                <VTick key={k} $major={k % 4 === 0}>
                                    {vLabels[k] && <VLabel>{vLabels[k]}</VLabel>}
                                </VTick>
                            ))}
                        </VRuler>
                        <RowHeads>
                            <RowHead $h={38}>1</RowHead>
                            {rows.map((_, i) => (
                                <RowHead key={i} $h={18.07} $active={i + 2 === 5}>
                                    {i + 2}
                                </RowHead>
                            ))}
                        </RowHeads>
                        <LeftPage>
                            <HeaderTag>Header</HeaderTag>
                            <HeaderBox>
                                <HeaderLine>Продажби първо тримесечие 2013</HeaderLine>
                            </HeaderBox>
                            <Table>
                                <TableHead>
                                    {headLabels.map((h, i) => (
                                        <HeadCell key={h} $left={headLeft[i]}>
                                            <HeadText>{h}</HeadText>
                                            <FilterBtn>
                                                <Tri dir="down" c="#666" />
                                                {i === 1 && (
                                                    <svg width="6" height="16" viewBox="0 0 6 16">
                                                        <path d="M3 16V1M1 4L3 1L5 4" fill="none" stroke="#555" />
                                                    </svg>
                                                )}
                                            </FilterBtn>
                                        </HeadCell>
                                    ))}
                                </TableHead>
                                {rows.map((r, i) => (
                                    <Row key={i} $band={i % 2 === 0}>
                                        {r.map((c, j) => (
                                            <Cell key={j} $align={cellAlign[j].a} $pad={cellAlign[j].p} $band={i % 2 === 0}>
                                                {c}
                                            </Cell>
                                        ))}
                                    </Row>
                                ))}
                                <Row $band />
                            </Table>
                        </LeftPage>
                        <RightPage>
                            <PageTitleRow>
                                <PageTitle>Продажби първо тримесечие 2013</PageTitle>
                                <Flower width="44" height="44" viewBox="-22 -22 44 44">
                                    {[0, 45, 90, 135, 180, 225, 270, 315].map((a) => (
                                        <path key={a} d="M0 -22C5 -15 5 -10 0 -5C-5 -10 -5 -15 0 -22Z" fill="#000" transform={`rotate(${a})`} />
                                    ))}
                                    <circle r="7" fill="#111" />
                                    {[0, 60, 120, 180, 240, 300].map((a) => (
                                        <circle key={a} cx="0" cy="-4" r="1.2" fill="#fff" transform={`rotate(${a})`} />
                                    ))}
                                </Flower>
                            </PageTitleRow>
                            {Array.from({ length: 26 }, (_, i) => (
                                <GridRow key={i} $h={i === 0 ? 38 : 18.07}>
                                    {rightCols.map(([n]) => (
                                        <GridCell key={n}>{i === 4 && n === 'I' && <ActiveCell />}</GridCell>
                                    ))}
                                </GridRow>
                            ))}
                        </RightPage>
                        <NextPage />
                    </PageArea>
                </View>
                <VScroll>
                    <ScrollBtn>
                        <Tri dir="up" />
                    </ScrollBtn>
                    <VThumb />
                    <VTrack />
                    <ScrollBtn>
                        <Tri dir="down" />
                    </ScrollBtn>
                </VScroll>
            </Main>

            <TabsBar>
                <NavArrows>
                    <Tri dir="left" c="#c8c8c8" />
                    <Tri dir="right" c="#c8c8c8" />
                </NavArrows>
                <SheetTab $active>Sheet1</SheetTab>
                <SheetTab>Sheet2</SheetTab>
                <AddSheet width="24" height="24" viewBox="0 0 24 24">
                    <circle cx="12" cy="12" r="11" fill="none" stroke="#888" strokeWidth="1.5" />
                    <path d="M12 6V18M6 12H18" stroke="#777" strokeWidth="2.4" />
                </AddSheet>
                <HScrollArea>
                    <HGrip>
                        <GripDot />
                        <GripDot />
                        <GripDot />
                    </HGrip>
                    <HScroll>
                        <HBtn>
                            <Tri dir="left" />
                        </HBtn>
                        <HThumb />
                        <HBtn $gap={33}>
                            <Tri dir="right" />
                        </HBtn>
                    </HScroll>
                </HScrollArea>
            </TabsBar>

            <StatusBar>
                READY
                <StatusTools>
                    <ViewIcon $gap={37} width="20" height="20" viewBox="0 0 20 20">
                        <path d="M1 1H19V19H1ZM1 7H19M1 13H19M7 1V19M13 1V19" fill="none" stroke="#cfe3d7" strokeWidth="1.5" />
                    </ViewIcon>
                    <ViewIcon $gap={36} width="21" height="20" viewBox="0 0 21 20">
                        <rect x="1" y="1" width="19" height="18" fill="none" stroke="#cfe3d7" strokeWidth="1.5" />
                        <path d="M6 5H15M6 8H15M6 11H15M6 14H15" stroke="#cfe3d7" strokeWidth="1.5" />
                    </ViewIcon>
                    <ViewIcon $gap={28} width="21" height="20" viewBox="0 0 21 20">
                        <rect x="1" y="1" width="19" height="18" fill="none" stroke="#cfe3d7" strokeWidth="1.5" />
                        <rect x="4" y="1" width="5" height="11" fill="#e8f2ec" />
                        <rect x="11" y="1" width="5" height="11" fill="#e8f2ec" />
                    </ViewIcon>
                    <ZoomSign>−</ZoomSign>
                    <ZoomTrack>
                        <ZoomKnob />
                    </ZoomTrack>
                    <ZoomSign>+</ZoomSign>
                    <ZoomValue>62 %</ZoomValue>
                </StatusTools>
            </StatusBar>
        </Window>
    );
}
